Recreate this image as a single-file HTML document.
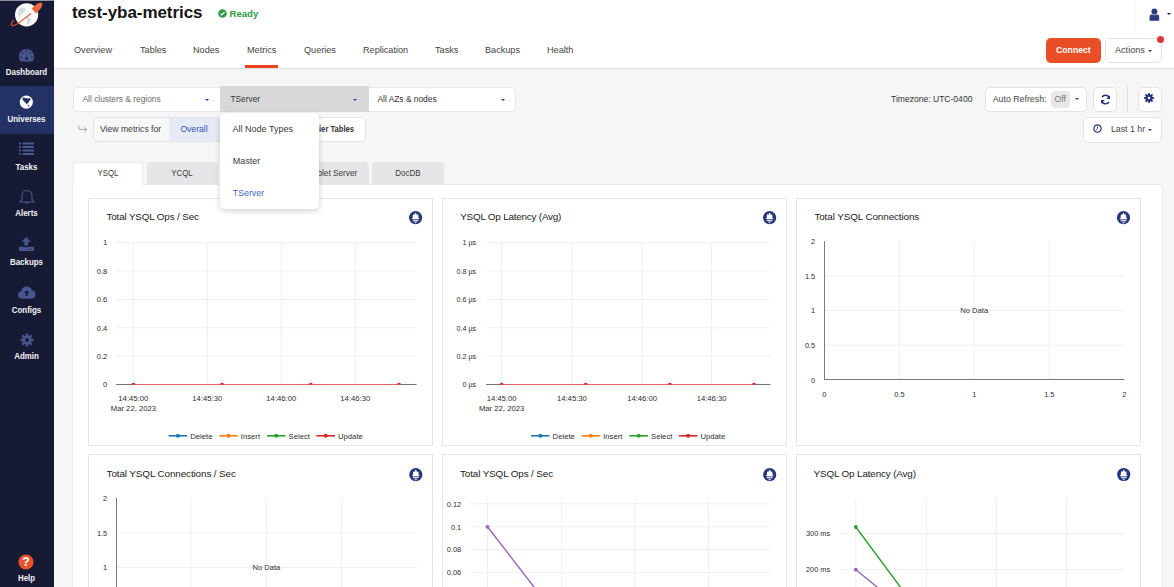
<!DOCTYPE html>
<html><head><meta charset="utf-8">
<style>
*{box-sizing:border-box}
html,body{margin:0;padding:0}
body{width:1174px;height:587px;overflow:hidden;position:relative;background:#f6f6f6;font-family:"Liberation Sans",sans-serif;color:#333}
.a{position:absolute;white-space:nowrap}
#side{position:absolute;left:0;top:0;width:54px;height:587px;background:#171a34}
#side .lbl{position:absolute;left:0;width:53px;text-align:center;color:#f4f4f6;font-weight:700;font-size:9px;line-height:10px;transform:scaleX(0.88)}
#hdr{position:absolute;left:54px;top:0;width:1120px;height:69px;background:#fff;border-bottom:1px solid #e2e2e2}
.tab{position:absolute;top:45.2px;font-size:9.6px;color:#444;line-height:10px;transform:scaleX(0.95);transform-origin:0 0}
.box{position:absolute;background:#fff;border:1px solid #e3e3e3;border-radius:5px}
.caret{position:absolute;width:0;height:0;border-left:2.8px solid transparent;border-right:2.8px solid transparent;border-top:2.8px solid #2b3b8c}
</style></head><body>

<!-- SIDEBAR -->
<div id="side">
  <div class="a" style="left:0;top:0;width:54px;height:1px;background:#8e90a0"></div>
  <svg class="a" style="left:0;top:0" width="54" height="32" viewBox="0 0 54 32">
    <circle cx="26.6" cy="14.8" r="11.6" fill="#fafafa"/>
    <path d="M19 9 q3 -2 6 -1 q1 3 -2 5 q-3 1 -2 4 q-2 0 -3 -3z M27 17 q3 0 4 3 q-1 4 -4 5 q0 -4 0 -8z" fill="#d5dbe0"/>
    <path d="M14 19.8 Q10.5 23.5 11.6 25.3 Q13 26.5 18 23.6 L31 13.5" stroke="#e8552f" stroke-width="1.1" fill="none" stroke-linejoin="round"/>
    <path d="M31.5 8.5 l5.5 -4.8 q3 -1.5 5.3 -0.8 q0.4 2.4 -1.2 5 l-5 5.6 z" fill="#ee6a45"/><path d="M33 10 l2.5 -2.5 M34.5 11.5 l2.5 -2.5" stroke="#c94a2a" stroke-width="0.6"/>
  </svg>
  <!-- dashboard -->
  <svg class="a" style="left:16px;top:46px" width="22" height="18" viewBox="16 46 22 18"><path d="M20.6 61.6 A7.7 7.7 0 1 1 32.4 61.6 Z" fill="#48558f"/><g fill="#171a34"><circle cx="26.5" cy="51.3" r="0.8"/><circle cx="22.7" cy="53" r="0.8"/><circle cx="30.3" cy="53" r="0.8"/><circle cx="21" cy="57" r="0.8"/><circle cx="32" cy="57" r="0.8"/><circle cx="26.5" cy="58.7" r="1.25"/><path d="M26 58.6 L27.3 53.8 L27.2 58.8z"/></g></svg>
  <div class="lbl" style="top:67.2px">Dashboard</div>
  <div class="a" style="left:0;top:86px;width:54px;height:48px;background:#243164"></div>
  <svg class="a" style="left:16px;top:92px" width="22" height="20" viewBox="16 92 22 20"><circle cx="26.3" cy="102.1" r="6.6" fill="#fff"/><path d="M22.3 98.6 Q23.2 97.2 24.6 97.8 Q25.4 98.4 26.2 98.2 Q26.9 97.6 27.6 98.4 Q28.6 98.8 29.6 98 Q30.8 98.4 30.6 99.4 Q29.6 100.2 29.2 101.4 Q28.6 102.8 27.4 103.2 Q27 104 27.6 104.8 Q26.6 104.6 26 103.6 Q25.2 102.4 24.4 101.8 Q23.2 101 22.3 98.6Z" fill="#243164"/><circle cx="28.6" cy="105.8" r="0.8" fill="#243164"/></svg>
  <div class="lbl" style="top:113.5px">Universes</div>
  <svg class="a" style="left:19px;top:142px" width="16" height="13" viewBox="0 0 16 13"><g fill="#48558f"><rect x="0" y="0.5" width="2" height="2"/><rect x="3.5" y="0.5" width="11.5" height="2"/><rect x="0" y="4" width="2" height="2"/><rect x="3.5" y="4" width="11.5" height="2"/><rect x="0" y="7.5" width="2" height="2"/><rect x="3.5" y="7.5" width="11.5" height="2"/><rect x="0" y="11" width="2" height="2"/><rect x="3.5" y="11" width="11.5" height="2"/></g></svg>
  <div class="lbl" style="top:161.8px">Tasks</div>
  <svg class="a" style="left:19px;top:189px" width="16" height="16" viewBox="0 0 16 16"><path d="M8 1.5 q-5 0 -5 6 v3 l-2 2.5 h14 l-2 -2.5 v-3 q0 -6 -5 -6z M6.5 14 h3" stroke="#48558f" stroke-width="1.2" fill="none"/></svg>
  <div class="lbl" style="top:208.3px">Alerts</div>
  <svg class="a" style="left:14px;top:232px" width="26" height="24" viewBox="14 232 26 24"><path d="M26.2 237 L30.9 241.8 L28 241.8 L28 245.6 L24.4 245.6 L24.4 241.8 L21.5 241.8 Z" fill="#48558f"/><path d="M19.6 246.8 H24 Q26.2 248.4 28.4 246.8 H33.3 Q34 246.8 34 247.5 V250.3 Q34 251 33.3 251 H19.6 Q18.9 251 18.9 250.3 V247.5 Q18.9 246.8 19.6 246.8Z" fill="#48558f"/><circle cx="29.5" cy="249.3" r="0.6" fill="#171a34"/><circle cx="31.6" cy="249.3" r="0.6" fill="#171a34"/></svg>
  <div class="lbl" style="top:256.8px">Backups</div>
  <svg class="a" style="left:18px;top:286px" width="17.5" height="13" viewBox="0 0 20 15"><path d="M5 14.6 q-5 0 -5 -4.5 q0 -3.5 3.5 -4 q1 -5.6 6.5 -5.6 q5 0 6 4.5 q4 0.5 4 4.8 q0 4.8 -5 4.8z" fill="#48558f"/><path d="M10 4.8 l3.2 3.2 h-2.1 v3.6 h-2.2 v-3.6 h-2.1z" fill="#171a34"/></svg>
  <div class="lbl" style="top:304.8px">Configs</div>
  <svg class="a" style="left:19.5px;top:333px" width="14" height="14" viewBox="-7 -7 14 14"><g fill="#48558f"><circle r="4.6"/><rect x="-1.2" y="-6.6" width="2.4" height="13.2"/><rect x="-1.2" y="-6.6" width="2.4" height="13.2" transform="rotate(45)"/><rect x="-1.2" y="-6.6" width="2.4" height="13.2" transform="rotate(90)"/><rect x="-1.2" y="-6.6" width="2.4" height="13.2" transform="rotate(135)"/></g><circle r="1.9" fill="#171a34"/></svg>
  <div class="lbl" style="top:351.3px">Admin</div>
  <svg class="a" style="left:18.4px;top:554px" width="16" height="16" viewBox="0 0 16 16"><circle cx="8" cy="8" r="7.6" fill="#e8542a"/><text x="8" y="12.3" text-anchor="middle" font-family="Liberation Sans" font-weight="700" font-size="12" fill="#fff">?</text></svg>
  <div class="lbl" style="top:573.3px">Help</div>
</div>

<!-- HEADER -->
<div id="hdr"></div>
<div class="a" style="left:72px;top:3px;font-size:17px;font-weight:700;color:#151515;line-height:20px;letter-spacing:-0.05px">test-yba-metrics</div>
<svg class="a" style="left:218px;top:9px" width="9" height="9" viewBox="0 0 9 9"><circle cx="4.5" cy="4.5" r="4.3" fill="#2c9b47"/><path d="M2.4 4.6 l1.4 1.4 l2.8 -2.8" stroke="#fff" stroke-width="1.2" fill="none"/></svg>
<div class="a" style="left:229.5px;top:8px;font-size:9.6px;font-weight:700;color:#2c9b47;line-height:11px">Ready</div>

<div class="tab" style="left:74px">Overview</div>
<div class="tab" style="left:140px">Tables</div>
<div class="tab" style="left:193px">Nodes</div>
<div class="tab" style="left:247px">Metrics</div>
<div class="a" style="left:245px;top:65px;width:33px;height:3px;background:#ea421e"></div>
<div class="tab" style="left:304px">Queries</div>
<div class="tab" style="left:363px">Replication</div>
<div class="tab" style="left:435px">Tasks</div>
<div class="tab" style="left:485px">Backups</div>
<div class="tab" style="left:547px">Health</div>

<div class="a" style="left:1135px;top:0;width:1px;height:32px;background:#f7f7f7"></div>
<svg class="a" style="left:1149px;top:7.5px" width="11" height="13" viewBox="0 0 11 13"><circle cx="5.4" cy="3.6" r="3" fill="#2b3b7d"/><path d="M0.6 12.4 v-3.6 q0 -2.6 2.6 -2.6 h4.4 q2.6 0 2.6 2.6 v3.6 q0 0.3 -0.3 0.3 h-9 q-0.3 0 -0.3 -0.3z" fill="#2b3b7d"/><path d="M2.8 6.4 q2.6 1 5.2 0" stroke="#dfe3ef" stroke-width="0.5" fill="none"/></svg>
<div class="caret" style="left:1167px;top:13px;border-top-color:#222"></div>

<div class="a" style="left:1046px;top:38px;width:54.5px;height:24.5px;background:#e94f26;border-radius:5px"></div>
<div class="a" style="left:1056px;top:45px;font-size:8.7px;font-weight:700;color:#fff;line-height:10px">Connect</div>
<div class="box" style="left:1105px;top:38px;width:57px;height:24.5px;border-radius:5px"></div>
<div class="a" style="left:1115px;top:45px;font-size:9.1px;color:#444;line-height:10px">Actions</div>
<div class="caret" style="left:1147.5px;top:49.5px;border-top-color:#2b3b7d"></div>
<div class="a" style="left:1156.6px;top:36px;width:7.4px;height:7.4px;border-radius:50%;background:#e0343a"></div>


<!-- FILTER ROW -->
<div class="a" style="left:73px;top:86.5px;width:443px;height:25px;background:#fff;border:1px solid #e6e6e6;border-radius:5px"></div>
<div class="a" style="left:220px;top:86px;width:148.5px;height:25.5px;background:#d8d8da"></div>
<div class="a" style="left:82.5px;top:94px;font-size:8.4px;color:#6b6b6b;line-height:10px">All clusters &amp; regions</div>
<div class="caret" style="left:205px;top:99px"></div>
<div class="a" style="left:230.5px;top:94px;font-size:8.3px;color:#333;line-height:10px">TServer</div>
<div class="caret" style="left:353px;top:99px"></div>
<div class="a" style="left:377.5px;top:94px;font-size:8.4px;color:#333;line-height:10px">All AZs &amp; nodes</div>
<div class="caret" style="left:501px;top:99px"></div>

<svg class="a" style="left:77.5px;top:125px" width="10" height="8" viewBox="0 0 10 8"><path d="M0.8 0.5 v2.3 q0 1.6 1.6 1.6 h6.3 M6.5 2.2 l2.3 2.2 l-2.3 2.2" stroke="#9a9a9a" stroke-width="0.9" fill="none"/></svg>
<div class="a" style="left:92.5px;top:117px;width:273px;height:24.5px;background:#f8f8f8;border:1px solid #e3e3e3;border-radius:5px"></div>
<div class="a" style="left:169px;top:117.5px;width:51px;height:23.5px;background:#e6eaf7"></div>
<div class="a" style="left:100px;top:124px;font-size:8.65px;color:#3a3a3a;line-height:10px">View metrics for</div>
<div class="a" style="left:180.4px;top:124.3px;font-size:8.6px;color:#3552b5;line-height:10px">Overall</div>
<div class="a" style="left:296px;top:118px;width:69px;height:22.5px;background:#fff;border-radius:0 4px 4px 0"></div>
<div class="a" style="left:319.2px;top:124px;font-size:8.7px;font-weight:700;color:#333;line-height:10px;transform:scaleX(0.88);transform-origin:0 0">ier Tables</div>

<div class="a" style="left:891px;top:93.5px;font-size:8.55px;color:#333;line-height:10px">Timezone: UTC-0400</div>
<div class="box" style="left:985px;top:86.8px;width:101.6px;height:25px"></div>
<div class="a" style="left:992.7px;top:93.5px;font-size:8.8px;color:#444;line-height:10px">Auto Refresh:</div>
<div class="a" style="left:1051px;top:90.5px;width:19.3px;height:17px;background:#e8e8e8;border-radius:4px"></div>
<div class="a" style="left:1054.6px;top:93.6px;font-size:8.6px;color:#777;line-height:10px">Off</div>
<div class="caret" style="left:1074.8px;top:98px"></div>
<div class="box" style="left:1093.4px;top:86.8px;width:24px;height:25px"></div>
<svg class="a" style="left:1100px;top:93.8px" width="11" height="11" viewBox="0 0 11 11"><path d="M9.3 4.3 A4 4 0 0 0 2 3.2 M1.7 6.7 A4 4 0 0 0 9 7.8" stroke="#24337a" stroke-width="1.5" fill="none"/><path d="M10 1.2 v3.8 h-3.8z M1 9.8 v-3.8 h3.8z" fill="#24337a"/></svg>
<div class="a" style="left:1127px;top:86px;width:1px;height:26px;background:#e0e0e0"></div>
<div class="box" style="left:1137.5px;top:86.8px;width:24.2px;height:25px"></div>
<svg class="a" style="left:1143.4px;top:92.4px" width="12" height="12" viewBox="-6 -6 12 12"><g fill="#24337a"><circle r="3.5"/><g id="t"><rect x="-0.9" y="-5" width="1.8" height="10"/><rect x="-0.9" y="-5" width="1.8" height="10" transform="rotate(45)"/><rect x="-0.9" y="-5" width="1.8" height="10" transform="rotate(90)"/><rect x="-0.9" y="-5" width="1.8" height="10" transform="rotate(135)"/></g></g><circle r="1.3" fill="#fff"/></svg>
<div class="box" style="left:1083.4px;top:117.4px;width:78.3px;height:25.2px"></div>
<svg class="a" style="left:1093px;top:124.3px" width="9" height="9" viewBox="0 0 9 9"><circle cx="4.5" cy="4.5" r="3.7" fill="none" stroke="#24337a" stroke-width="1.2"/><path d="M4.5 2.3 v2.4 l-1.3 1" stroke="#24337a" stroke-width="0.9" fill="none"/></svg>
<div class="a" style="left:1110.9px;top:124px;font-size:8.8px;color:#444;line-height:10px">Last 1 hr</div>
<div class="caret" style="left:1147.8px;top:128.6px"></div>

<!-- METRIC TABS -->
<div class="a" style="left:73px;top:161.5px;width:69.5px;height:23px;background:#fff;border:1px solid #ececec;border-bottom:none;border-radius:4px 4px 0 0"></div>
<div class="a" style="left:147px;top:161.5px;width:71px;height:22.5px;background:#e6e6e8;border-radius:4px 4px 0 0"></div>
<div class="a" style="left:222.5px;top:161.5px;width:71px;height:22.5px;background:#e6e6e8;border-radius:4px 4px 0 0"></div>
<div class="a" style="left:297.5px;top:161.5px;width:71px;height:22.5px;background:#e6e6e8;border-radius:4px 4px 0 0"></div>
<div class="a" style="left:372.3px;top:161.5px;width:71.7px;height:22.5px;background:#e6e6e8;border-radius:4px 4px 0 0"></div>
<div class="a" style="left:67.5px;top:168.2px;width:80px;text-align:center;font-size:8.6px;color:#3a3a3a;line-height:10px;transform:scaleX(0.91)">YSQL</div>
<div class="a" style="left:142.4px;top:168.2px;width:80px;text-align:center;font-size:8.6px;color:#3a3a3a;line-height:10px;transform:scaleX(0.91)">YCQL</div>
<div class="a" style="left:293px;top:168.2px;width:80px;text-align:center;font-size:8.6px;color:#3a3a3a;line-height:10px;transform:scaleX(0.96)">Tablet Server</div>
<div class="a" style="left:368px;top:168.2px;width:80px;text-align:center;font-size:8.6px;color:#3a3a3a;line-height:10px;transform:scaleX(0.93)">DocDB</div>

<!-- MAIN PANEL -->
<div class="a" style="left:72px;top:184px;width:1091px;height:420px;background:#fff;border:1px solid #ebebeb;border-top:none;border-radius:0 5px 0 0"></div>
<div class="a" style="left:142px;top:183.5px;width:1020px;height:1px;background:#ebebeb;border-radius:0 5px 0 0"></div>
<div class="a" style="left:88px;top:198px;width:345px;height:248px;border:1px solid #e6e6e6"></div>
<div class="a" style="left:442px;top:198px;width:345px;height:248px;border:1px solid #e6e6e6"></div>
<div class="a" style="left:796px;top:198px;width:345px;height:248px;border:1px solid #e6e6e6"></div>
<div class="a" style="left:88px;top:454px;width:345px;height:200px;border:1px solid #e6e6e6"></div>
<div class="a" style="left:442px;top:454px;width:345px;height:200px;border:1px solid #e6e6e6"></div>
<div class="a" style="left:796px;top:454px;width:345px;height:200px;border:1px solid #e6e6e6"></div>
<!--CHARTS--><svg class="a" style="left:0;top:0" width="1174" height="587" viewBox="0 0 1174 587" font-family="Liberation Sans"><text x="106.5" y="220.2" font-size="9.9" text-anchor="start" fill="#222" font-weight="400" textLength="92.4" lengthAdjust="spacing">Total YSQL Ops / Sec</text><g transform="translate(415.6,217.6)"><circle r="6.6" fill="#27357a"/><path d="M0 -5.1 Q1.1 -3.6 1.4 -2.6 Q2 -2.9 2.4 -3.5 Q3.1 -1.7 2.8 0.5 L4 0.5 L3.1 1.5 L-3.1 1.5 L-4 0.5 L-2.8 0.5 Q-3.1 -1.7 -2.4 -3.5 Q-2 -2.9 -1.4 -2.6 Q-1.1 -3.6 0 -5.1Z" fill="#fff"/><rect x="-2.9" y="2" width="5.8" height="1.5" fill="#d3d6e6"/><path d="M-2 4 h4 l-2 2z" fill="#c3c7dc"/></g><line x1="116" y1="242.7" x2="416.6" y2="242.7" stroke="#efefef" stroke-width="1"/><line x1="116" y1="271.06" x2="416.6" y2="271.06" stroke="#efefef" stroke-width="1"/><line x1="116" y1="299.42" x2="416.6" y2="299.42" stroke="#efefef" stroke-width="1"/><line x1="116" y1="327.78" x2="416.6" y2="327.78" stroke="#efefef" stroke-width="1"/><line x1="116" y1="356.14" x2="416.6" y2="356.14" stroke="#efefef" stroke-width="1"/><line x1="133.3" y1="242.7" x2="133.3" y2="384.5" stroke="#efefef" stroke-width="1"/><line x1="207.3" y1="242.7" x2="207.3" y2="384.5" stroke="#efefef" stroke-width="1"/><line x1="281.3" y1="242.7" x2="281.3" y2="384.5" stroke="#efefef" stroke-width="1"/><line x1="355.3" y1="242.7" x2="355.3" y2="384.5" stroke="#efefef" stroke-width="1"/><text x="107.3" y="245.45" font-size="7.6" text-anchor="end" fill="#2e2e2e" font-weight="400">1</text><text x="107.3" y="273.81" font-size="7.6" text-anchor="end" fill="#2e2e2e" font-weight="400">0.8</text><text x="107.3" y="302.17" font-size="7.6" text-anchor="end" fill="#2e2e2e" font-weight="400">0.6</text><text x="107.3" y="330.53" font-size="7.6" text-anchor="end" fill="#2e2e2e" font-weight="400">0.4</text><text x="107.3" y="358.89" font-size="7.6" text-anchor="end" fill="#2e2e2e" font-weight="400">0.2</text><text x="107.3" y="387.25" font-size="7.6" text-anchor="end" fill="#2e2e2e" font-weight="400">0</text><line x1="116" y1="384.5" x2="416.6" y2="384.5" stroke="#777" stroke-width="1"/><line x1="133.4" y1="384.5" x2="399" y2="384.5" stroke="#e26262" stroke-width="1"/><path d="M131.4 384.6 A2 1.9 0 0 1 135.4 384.6Z" fill="#dc1f1f"/><path d="M220 384.6 A2 1.9 0 0 1 224 384.6Z" fill="#dc1f1f"/><path d="M308.8 384.6 A2 1.9 0 0 1 312.8 384.6Z" fill="#dc1f1f"/><path d="M397 384.6 A2 1.9 0 0 1 401 384.6Z" fill="#dc1f1f"/><text x="133.3" y="401.05" font-size="7.7" text-anchor="middle" fill="#2e2e2e" font-weight="400">14:45:00</text><text x="207.3" y="401.05" font-size="7.7" text-anchor="middle" fill="#2e2e2e" font-weight="400">14:45:30</text><text x="281.3" y="401.05" font-size="7.7" text-anchor="middle" fill="#2e2e2e" font-weight="400">14:46:00</text><text x="355.3" y="401.05" font-size="7.7" text-anchor="middle" fill="#2e2e2e" font-weight="400">14:46:30</text><text x="133.4" y="410.95" font-size="7.7" text-anchor="middle" fill="#2e2e2e" font-weight="400">Mar 22, 2023</text><line x1="168.6" y1="435.8" x2="187.2" y2="435.8" stroke="#1f77b4" stroke-width="1.6"/><circle cx="177.9" cy="435.8" r="2" fill="#1f77b4"/><text x="190.2" y="438.6" font-size="7.7" text-anchor="start" fill="#2e2e2e" font-weight="400">Delete</text><line x1="219.2" y1="435.8" x2="237.8" y2="435.8" stroke="#ff7f0e" stroke-width="1.6"/><circle cx="228.5" cy="435.8" r="2" fill="#ff7f0e"/><text x="240.8" y="438.6" font-size="7.7" text-anchor="start" fill="#2e2e2e" font-weight="400">Insert</text><line x1="267" y1="435.8" x2="285.6" y2="435.8" stroke="#2ca02c" stroke-width="1.6"/><circle cx="276.3" cy="435.8" r="2" fill="#2ca02c"/><text x="288.6" y="438.6" font-size="7.7" text-anchor="start" fill="#2e2e2e" font-weight="400">Select</text><line x1="316.4" y1="435.8" x2="335" y2="435.8" stroke="#d62728" stroke-width="1.6"/><circle cx="325.7" cy="435.8" r="2" fill="#d62728"/><text x="338" y="438.6" font-size="7.7" text-anchor="start" fill="#2e2e2e" font-weight="400">Update</text><text x="460.2" y="220.2" font-size="9.9" text-anchor="start" fill="#222" font-weight="400" textLength="101.2" lengthAdjust="spacing">YSQL Op Latency (Avg)</text><g transform="translate(769.6,217.6)"><circle r="6.6" fill="#27357a"/><path d="M0 -5.1 Q1.1 -3.6 1.4 -2.6 Q2 -2.9 2.4 -3.5 Q3.1 -1.7 2.8 0.5 L4 0.5 L3.1 1.5 L-3.1 1.5 L-4 0.5 L-2.8 0.5 Q-3.1 -1.7 -2.4 -3.5 Q-2 -2.9 -1.4 -2.6 Q-1.1 -3.6 0 -5.1Z" fill="#fff"/><rect x="-2.9" y="2" width="5.8" height="1.5" fill="#d3d6e6"/><path d="M-2 4 h4 l-2 2z" fill="#c3c7dc"/></g><line x1="486" y1="242.7" x2="770.4" y2="242.7" stroke="#efefef" stroke-width="1"/><line x1="486" y1="271.06" x2="770.4" y2="271.06" stroke="#efefef" stroke-width="1"/><line x1="486" y1="299.42" x2="770.4" y2="299.42" stroke="#efefef" stroke-width="1"/><line x1="486" y1="327.78" x2="770.4" y2="327.78" stroke="#efefef" stroke-width="1"/><line x1="486" y1="356.14" x2="770.4" y2="356.14" stroke="#efefef" stroke-width="1"/><line x1="501.6" y1="242.7" x2="501.6" y2="384.5" stroke="#efefef" stroke-width="1"/><line x1="571.9" y1="242.7" x2="571.9" y2="384.5" stroke="#efefef" stroke-width="1"/><line x1="642.1" y1="242.7" x2="642.1" y2="384.5" stroke="#efefef" stroke-width="1"/><line x1="711.6" y1="242.7" x2="711.6" y2="384.5" stroke="#efefef" stroke-width="1"/><text x="476.2" y="245.45" font-size="7.2" text-anchor="end" fill="#2e2e2e" font-weight="400">1 µs</text><text x="476.2" y="273.81" font-size="7.2" text-anchor="end" fill="#2e2e2e" font-weight="400">0.8 µs</text><text x="476.2" y="302.17" font-size="7.2" text-anchor="end" fill="#2e2e2e" font-weight="400">0.6 µs</text><text x="476.2" y="330.53" font-size="7.2" text-anchor="end" fill="#2e2e2e" font-weight="400">0.4 µs</text><text x="476.2" y="358.89" font-size="7.2" text-anchor="end" fill="#2e2e2e" font-weight="400">0.2 µs</text><text x="476.2" y="387.25" font-size="7.2" text-anchor="end" fill="#2e2e2e" font-weight="400">0 µs</text><line x1="486" y1="384.5" x2="770.4" y2="384.5" stroke="#777" stroke-width="1"/><line x1="501.6" y1="384.5" x2="754" y2="384.5" stroke="#e26262" stroke-width="1"/><path d="M499.6 384.6 A2 1.9 0 0 1 503.6 384.6Z" fill="#dc1f1f"/><path d="M583.7 384.6 A2 1.9 0 0 1 587.7 384.6Z" fill="#dc1f1f"/><path d="M667.8 384.6 A2 1.9 0 0 1 671.8 384.6Z" fill="#dc1f1f"/><path d="M752 384.6 A2 1.9 0 0 1 756 384.6Z" fill="#dc1f1f"/><text x="501.6" y="401.05" font-size="7.7" text-anchor="middle" fill="#2e2e2e" font-weight="400">14:45:00</text><text x="571.9" y="401.05" font-size="7.7" text-anchor="middle" fill="#2e2e2e" font-weight="400">14:45:30</text><text x="642.1" y="401.05" font-size="7.7" text-anchor="middle" fill="#2e2e2e" font-weight="400">14:46:00</text><text x="711.6" y="401.05" font-size="7.7" text-anchor="middle" fill="#2e2e2e" font-weight="400">14:46:30</text><text x="501.6" y="410.95" font-size="7.7" text-anchor="middle" fill="#2e2e2e" font-weight="400">Mar 22, 2023</text><line x1="531" y1="435.8" x2="549.6" y2="435.8" stroke="#1f77b4" stroke-width="1.6"/><circle cx="540.3" cy="435.8" r="2" fill="#1f77b4"/><text x="552.6" y="438.6" font-size="7.7" text-anchor="start" fill="#2e2e2e" font-weight="400">Delete</text><line x1="581.6" y1="435.8" x2="600.2" y2="435.8" stroke="#ff7f0e" stroke-width="1.6"/><circle cx="590.9" cy="435.8" r="2" fill="#ff7f0e"/><text x="603.2" y="438.6" font-size="7.7" text-anchor="start" fill="#2e2e2e" font-weight="400">Insert</text><line x1="629.4" y1="435.8" x2="648" y2="435.8" stroke="#2ca02c" stroke-width="1.6"/><circle cx="638.7" cy="435.8" r="2" fill="#2ca02c"/><text x="651" y="438.6" font-size="7.7" text-anchor="start" fill="#2e2e2e" font-weight="400">Select</text><line x1="678.8" y1="435.8" x2="697.4" y2="435.8" stroke="#d62728" stroke-width="1.6"/><circle cx="688.1" cy="435.8" r="2" fill="#d62728"/><text x="700.4" y="438.6" font-size="7.7" text-anchor="start" fill="#2e2e2e" font-weight="400">Update</text><text x="814.4" y="220.2" font-size="9.9" text-anchor="start" fill="#222" font-weight="400" textLength="104.9" lengthAdjust="spacing">Total YSQL Connections</text><g transform="translate(1123.5,217.7)"><circle r="6.6" fill="#27357a"/><path d="M0 -5.1 Q1.1 -3.6 1.4 -2.6 Q2 -2.9 2.4 -3.5 Q3.1 -1.7 2.8 0.5 L4 0.5 L3.1 1.5 L-3.1 1.5 L-4 0.5 L-2.8 0.5 Q-3.1 -1.7 -2.4 -3.5 Q-2 -2.9 -1.4 -2.6 Q-1.1 -3.6 0 -5.1Z" fill="#fff"/><rect x="-2.9" y="2" width="5.8" height="1.5" fill="#d3d6e6"/><path d="M-2 4 h4 l-2 2z" fill="#c3c7dc"/></g><line x1="824.2" y1="276" x2="1124.4" y2="276" stroke="#efefef" stroke-width="1"/><line x1="824.2" y1="310.6" x2="1124.4" y2="310.6" stroke="#efefef" stroke-width="1"/><line x1="824.2" y1="345.2" x2="1124.4" y2="345.2" stroke="#efefef" stroke-width="1"/><line x1="899.4" y1="241.4" x2="899.4" y2="379.8" stroke="#efefef" stroke-width="1"/><line x1="974.2" y1="241.4" x2="974.2" y2="379.8" stroke="#efefef" stroke-width="1"/><line x1="1049.3" y1="241.4" x2="1049.3" y2="379.8" stroke="#efefef" stroke-width="1"/><line x1="824.5" y1="241" x2="824.5" y2="380" stroke="#7a7a7a" stroke-width="1"/><line x1="824.2" y1="379.5" x2="1124.4" y2="379.5" stroke="#7a7a7a" stroke-width="1"/><text x="815.2" y="244.15" font-size="7.4" text-anchor="end" fill="#2e2e2e" font-weight="400">2</text><text x="815.2" y="278.75" font-size="7.4" text-anchor="end" fill="#2e2e2e" font-weight="400">1.5</text><text x="815.2" y="313.35" font-size="7.4" text-anchor="end" fill="#2e2e2e" font-weight="400">1</text><text x="815.2" y="347.95" font-size="7.4" text-anchor="end" fill="#2e2e2e" font-weight="400">0.5</text><text x="815.2" y="382.55" font-size="7.4" text-anchor="end" fill="#2e2e2e" font-weight="400">0</text><text x="824.2" y="397.05" font-size="7.4" text-anchor="middle" fill="#2e2e2e" font-weight="400">0</text><text x="899.4" y="397.05" font-size="7.4" text-anchor="middle" fill="#2e2e2e" font-weight="400">0.5</text><text x="974.2" y="397.05" font-size="7.4" text-anchor="middle" fill="#2e2e2e" font-weight="400">1</text><text x="1049.3" y="397.05" font-size="7.4" text-anchor="middle" fill="#2e2e2e" font-weight="400">1.5</text><text x="1124.4" y="397.05" font-size="7.4" text-anchor="middle" fill="#2e2e2e" font-weight="400">2</text><text x="974.2" y="313.45" font-size="7.6" text-anchor="middle" fill="#2e2e2e" font-weight="400">No Data</text><text x="106.6" y="477.1" font-size="9.9" text-anchor="start" fill="#222" font-weight="400" textLength="129.3" lengthAdjust="spacing">Total YSQL Connections / Sec</text><g transform="translate(415.8,474.7)"><circle r="6.6" fill="#27357a"/><path d="M0 -5.1 Q1.1 -3.6 1.4 -2.6 Q2 -2.9 2.4 -3.5 Q3.1 -1.7 2.8 0.5 L4 0.5 L3.1 1.5 L-3.1 1.5 L-4 0.5 L-2.8 0.5 Q-3.1 -1.7 -2.4 -3.5 Q-2 -2.9 -1.4 -2.6 Q-1.1 -3.6 0 -5.1Z" fill="#fff"/><rect x="-2.9" y="2" width="5.8" height="1.5" fill="#d3d6e6"/><path d="M-2 4 h4 l-2 2z" fill="#c3c7dc"/></g><line x1="116" y1="532.9" x2="416.7" y2="532.9" stroke="#efefef" stroke-width="1"/><line x1="116" y1="567.5" x2="416.7" y2="567.5" stroke="#efefef" stroke-width="1"/><line x1="116" y1="602.1" x2="416.7" y2="602.1" stroke="#efefef" stroke-width="1"/><line x1="116" y1="636.7" x2="416.7" y2="636.7" stroke="#efefef" stroke-width="1"/><line x1="191" y1="498.3" x2="191" y2="587" stroke="#efefef" stroke-width="1"/><line x1="266.4" y1="498.3" x2="266.4" y2="587" stroke="#efefef" stroke-width="1"/><line x1="341.6" y1="498.3" x2="341.6" y2="587" stroke="#efefef" stroke-width="1"/><line x1="116.5" y1="498" x2="116.5" y2="587" stroke="#7a7a7a" stroke-width="1"/><text x="107.2" y="501.05" font-size="7.4" text-anchor="end" fill="#2e2e2e" font-weight="400">2</text><text x="107.2" y="535.65" font-size="7.4" text-anchor="end" fill="#2e2e2e" font-weight="400">1.5</text><text x="107.2" y="570.25" font-size="7.4" text-anchor="end" fill="#2e2e2e" font-weight="400">1</text><text x="266.4" y="570.05" font-size="7.6" text-anchor="middle" fill="#2e2e2e" font-weight="400">No Data</text><text x="460" y="477.1" font-size="9.9" text-anchor="start" fill="#222" font-weight="400" textLength="93.1" lengthAdjust="spacing">Total YSQL Ops / Sec</text><g transform="translate(769.7,474.7)"><circle r="6.6" fill="#27357a"/><path d="M0 -5.1 Q1.1 -3.6 1.4 -2.6 Q2 -2.9 2.4 -3.5 Q3.1 -1.7 2.8 0.5 L4 0.5 L3.1 1.5 L-3.1 1.5 L-4 0.5 L-2.8 0.5 Q-3.1 -1.7 -2.4 -3.5 Q-2 -2.9 -1.4 -2.6 Q-1.1 -3.6 0 -5.1Z" fill="#fff"/><rect x="-2.9" y="2" width="5.8" height="1.5" fill="#d3d6e6"/><path d="M-2 4 h4 l-2 2z" fill="#c3c7dc"/></g><line x1="470.3" y1="503.8" x2="770.3" y2="503.8" stroke="#efefef" stroke-width="1"/><line x1="470.3" y1="526.75" x2="770.3" y2="526.75" stroke="#efefef" stroke-width="1"/><line x1="470.3" y1="549.7" x2="770.3" y2="549.7" stroke="#efefef" stroke-width="1"/><line x1="470.3" y1="572.65" x2="770.3" y2="572.65" stroke="#efefef" stroke-width="1"/><line x1="487.5" y1="498.3" x2="487.5" y2="587" stroke="#efefef" stroke-width="1"/><line x1="561.7" y1="498.3" x2="561.7" y2="587" stroke="#efefef" stroke-width="1"/><line x1="634.9" y1="498.3" x2="634.9" y2="587" stroke="#efefef" stroke-width="1"/><line x1="708.3" y1="498.3" x2="708.3" y2="587" stroke="#efefef" stroke-width="1"/><text x="461.2" y="506.55" font-size="7.4" text-anchor="end" fill="#2e2e2e" font-weight="400">0.12</text><text x="461.2" y="529.5" font-size="7.4" text-anchor="end" fill="#2e2e2e" font-weight="400">0.1</text><text x="461.2" y="552.45" font-size="7.4" text-anchor="end" fill="#2e2e2e" font-weight="400">0.08</text><text x="461.2" y="575.4" font-size="7.4" text-anchor="end" fill="#2e2e2e" font-weight="400">0.06</text><line x1="487.5" y1="526.8" x2="534" y2="587" stroke="#9467bd" stroke-width="1.4"/><circle cx="487.5" cy="526.8" r="1.9" fill="#9467bd"/><text x="813.6" y="477.1" font-size="9.9" text-anchor="start" fill="#222" font-weight="400" textLength="102.4" lengthAdjust="spacing">YSQL Op Latency (Avg)</text><g transform="translate(1123.7,474.5)"><circle r="6.6" fill="#27357a"/><path d="M0 -5.1 Q1.1 -3.6 1.4 -2.6 Q2 -2.9 2.4 -3.5 Q3.1 -1.7 2.8 0.5 L4 0.5 L3.1 1.5 L-3.1 1.5 L-4 0.5 L-2.8 0.5 Q-3.1 -1.7 -2.4 -3.5 Q-2 -2.9 -1.4 -2.6 Q-1.1 -3.6 0 -5.1Z" fill="#fff"/><rect x="-2.9" y="2" width="5.8" height="1.5" fill="#d3d6e6"/><path d="M-2 4 h4 l-2 2z" fill="#c3c7dc"/></g><line x1="839.7" y1="533.4" x2="1124.3" y2="533.4" stroke="#efefef" stroke-width="1"/><line x1="839.7" y1="569.4" x2="1124.3" y2="569.4" stroke="#efefef" stroke-width="1"/><line x1="855.8" y1="498.2" x2="855.8" y2="587" stroke="#efefef" stroke-width="1"/><line x1="926.4" y1="498.2" x2="926.4" y2="587" stroke="#efefef" stroke-width="1"/><line x1="996.4" y1="498.2" x2="996.4" y2="587" stroke="#efefef" stroke-width="1"/><line x1="1066.4" y1="498.2" x2="1066.4" y2="587" stroke="#efefef" stroke-width="1"/><text x="830.2" y="536.15" font-size="7.4" text-anchor="end" fill="#2e2e2e" font-weight="400">300 ms</text><text x="830.2" y="572.15" font-size="7.4" text-anchor="end" fill="#2e2e2e" font-weight="400">200 ms</text><line x1="855.8" y1="527" x2="900.3" y2="587" stroke="#2ca02c" stroke-width="1.4"/><circle cx="855.8" cy="527" r="1.9" fill="#2ca02c"/><line x1="855.8" y1="569.7" x2="877.1" y2="587" stroke="#9467bd" stroke-width="1.4"/><circle cx="855.8" cy="569.7" r="1.9" fill="#9467bd"/></svg><!--/CHARTS--><!--/CHARTS--><!--/CHARTS--><!--/CHARTS--><!--/CHARTS--><!--/CHARTS--><!--/CHARTS--><!--/CHARTS--><!--/CHARTS--><!--/CHARTS-->

<!-- DROPDOWN -->
<div class="a" style="left:220.4px;top:113.3px;width:98.6px;height:95.7px;background:#fff;border-radius:5px;box-shadow:0 2px 6px rgba(0,0,0,0.18)"></div>
<div class="a" style="left:232.6px;top:123.5px;font-size:9px;color:#3a3a3a;line-height:11px">All Node Types</div>
<div class="a" style="left:232.8px;top:155.5px;font-size:9px;color:#3a3a3a;line-height:11px">Master</div>
<div class="a" style="left:232.8px;top:188px;font-size:8.8px;color:#3f63c8;line-height:11px">TServer</div>

</body></html>
